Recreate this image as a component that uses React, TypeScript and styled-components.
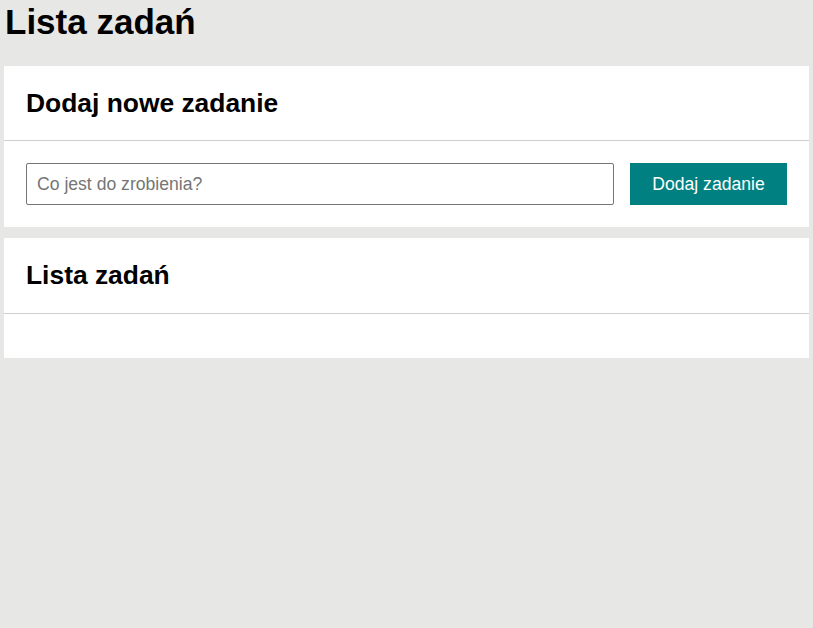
import styled, { createGlobalStyle } from "styled-components";

const GlobalStyle = createGlobalStyle`
  html, body {
    margin: 0;
    padding: 0;
    background: #e7e7e5;
    font-family: "Liberation Sans", Arial, sans-serif;
  }
`;

const Page = styled.div`
  padding: 2px 4px;
`;

const Title = styled.h1`
  margin: 0 0 24px 1px;
  font-size: 35px;
  font-weight: bold;
  color: #000;
`;

const Card = styled.section`
  background: #fff;
  margin-bottom: 11px;
`;

const CardHeader = styled.div`
  padding: 22px;
  border-bottom: 1px solid #cfcfcf;
`;

const CardTitle = styled.h2`
  margin: 0;
  font-size: 26.4px;
  line-height: 1.15;
  font-weight: bold;
  color: #000;
`;

const CardBody = styled.div`
  padding: 22px;
`;

const Form = styled.form`
  display: flex;
  gap: 16px;
`;

const Input = styled.input`
  flex: 1;
  height: 42px;
  box-sizing: border-box;
  padding: 0 10px;
  border: 1px solid #767676;
  border-radius: 2px;
  font-family: "Liberation Sans", Arial, sans-serif;
  font-size: 17.6px;
  color: #000;

  &::placeholder {
    color: #757575;
  }
`;

const Button = styled.button`
  width: 157px;
  height: 42px;
  border: none;
  background: #008080;
  color: #fff;
  font-family: "Liberation Sans", Arial, sans-serif;
  font-size: 17.6px;
  cursor: pointer;
`;

export default function App() {
  return (
    <Page>
      <GlobalStyle />
      <Title>Lista zadań</Title>
      <Card>
        <CardHeader>
          <CardTitle>Dodaj nowe zadanie</CardTitle>
        </CardHeader>
        <CardBody>
          <Form onSubmit={(e) => e.preventDefault()}>
            <Input type="text" placeholder="Co jest do zrobienia?" />
            <Button type="submit">Dodaj zadanie</Button>
          </Form>
        </CardBody>
      </Card>
      <Card>
        <CardHeader>
          <CardTitle>Lista zadań</CardTitle>
        </CardHeader>
        <CardBody />
      </Card>
    </Page>
  );
}
